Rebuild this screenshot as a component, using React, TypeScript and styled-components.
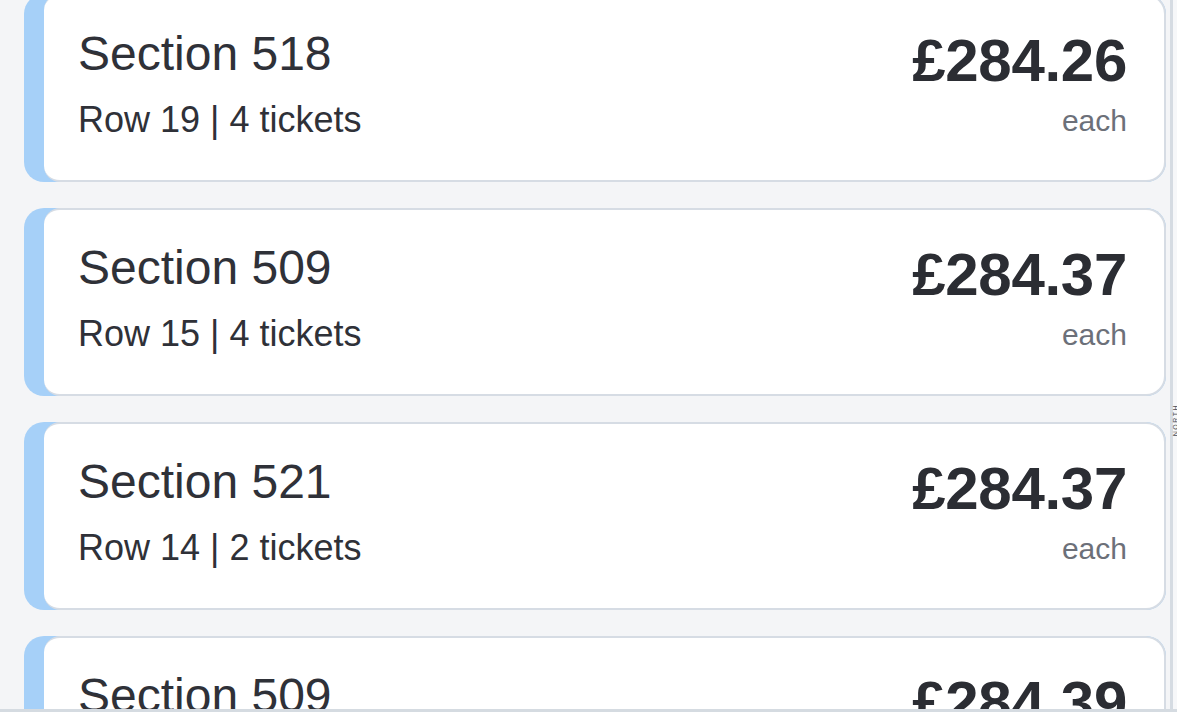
import React from "react";
import styled, { createGlobalStyle } from "styled-components";

const GlobalStyle = createGlobalStyle`
  * {
    box-sizing: border-box;
  }
  body {
    margin: 0;
    background: #f4f5f7;
    font-family: "Liberation Sans", Arial, Helvetica, sans-serif;
    color: #2f3138;
  }
`;

const Page = styled.div`
  display: flex;
  flex-direction: column;
  width: 1177px;
  height: 712px;
  overflow: hidden;
  background: #f4f5f7;
`;

const Main = styled.div`
  display: flex;
  flex: 1;
  min-height: 0;
`;

const ListPanel = styled.div`
  flex: 0 0 1170px;
  overflow: hidden;
  padding: 0 4px 0 24px;
`;

const List = styled.div`
  display: flex;
  flex-direction: column;
  gap: 26px;
  margin-top: -6px;
`;

const Card = styled.div`
  display: flex;
  height: 188px;
  padding-left: 20px;
  border-radius: 20px;
  background: #a6d0f8;
`;

const CardBody = styled.div`
  flex: 1;
  display: flex;
  justify-content: space-between;
  padding: 30px 37px 0 34px;
  background: #ffffff;
  border: 2px solid #d6dce4;
  border-left: none;
  border-radius: 16px 20px 20px 16px;
`;

const Info = styled.div`
  display: flex;
  flex-direction: column;
`;

const Title = styled.div`
  font-size: 48px;
  line-height: 56px;
  color: #2f3138;
`;

const Details = styled.div`
  margin-top: 16px;
  font-size: 36px;
  line-height: 44px;
  color: #2f3138;
`;

const PriceBox = styled.div`
  display: flex;
  flex-direction: column;
  align-items: flex-end;
`;

const Price = styled.div`
  margin-top: 5px;
  font-size: 60px;
  line-height: 60px;
  font-weight: 700;
  letter-spacing: -0.3px;
  color: #2b2d33;
`;

const Each = styled.div`
  margin-top: 12px;
  font-size: 30px;
  line-height: 36px;
  color: #6c7079;
`;

const MapPanel = styled.div`
  flex: 1;
  min-width: 0;
  display: flex;
  justify-content: center;
  padding-top: 404px;
  border-left: 3px solid #d5dbe2;
  background: #f6f7f9;
`;

const North = styled.span`
  writing-mode: vertical-rl;
  transform: rotate(180deg);
  height: fit-content;
  font-size: 7px;
  letter-spacing: 1.5px;
  color: #4b4f57;
`;

const Footer = styled.div`
  height: 3px;
  background: #d5dbe1;
`;

interface Listing {
  section: number;
  row: number;
  tickets: number;
  price: string;
}

const listings: Listing[] = [
  { section: 518, row: 19, tickets: 4, price: "£284.26" },
  { section: 509, row: 15, tickets: 4, price: "£284.37" },
  { section: 521, row: 14, tickets: 2, price: "£284.37" },
  { section: 509, row: 12, tickets: 2, price: "£284.39" },
];

function App() {
  return (
    <Page>
      <GlobalStyle />
      <Main>
        <ListPanel>
          <List>
            {listings.map((item, i) => (
              <Card key={i}>
                <CardBody>
                  <Info>
                    <Title>Section {item.section}</Title>
                    <Details>
                      Row {item.row} | {item.tickets} tickets
                    </Details>
                  </Info>
                  <PriceBox>
                    <Price>{item.price}</Price>
                    <Each>each</Each>
                  </PriceBox>
                </CardBody>
              </Card>
            ))}
          </List>
        </ListPanel>
        <MapPanel>
          <North>NORTH</North>
        </MapPanel>
      </Main>
      <Footer />
    </Page>
  );
}

export default App;
